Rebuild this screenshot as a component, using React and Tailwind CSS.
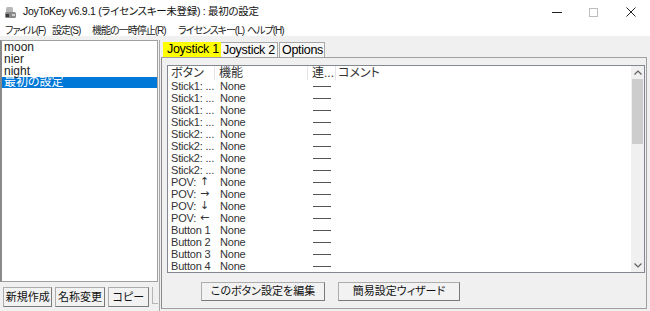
import React from 'react';

const ROWS = [
  ['Stick1: ...'], ['Stick1: ...'], ['Stick1: ...'], ['Stick1: ...'],
  ['Stick2: ...'], ['Stick2: ...'], ['Stick2: ...'], ['Stick2: ...'],
  ['POV:', '↑'], ['POV:', '→'], ['POV:', '↓'], ['POV:', '←'],
  ['Button 1'], ['Button 2'], ['Button 3'], ['Button 4'],
];

const MENU = [
  { label: 'ファイル(F)', w: 'w-[47px]' },
  { label: '設定(S)', w: 'w-[40px]' },
  { label: '機能の一時停止(R)', w: 'w-[86px]' },
  { label: 'ライセンスキー(L)', w: 'w-[69px]' },
  { label: 'ヘルプ(H)', w: 'w-[60px]' },
];

const PROFILES = ['moon', 'nier', 'night'];

function AppIcon() {
  return (
    <svg width="13" height="12" viewBox="0 0 13 12">
      <rect x="2" y="0" width="7" height="7" rx="1.5" fill="#b8b8b8" />
      <rect x="1" y="5" width="11" height="6" rx="1.5" fill="#8a8a8a" />
      <rect x="2" y="7" width="3" height="3" fill="#3c3c3c" />
      <rect x="8" y="7" width="3" height="2" fill="#d0d0d0" />
    </svg>
  );
}

function Button({ children, className = '' }) {
  return (
    <div className={`flex items-center justify-center bg-[#f2f2f2] border border-[#adadad] border-b-[#7a7a7a] border-r-[#7a7a7a] text-[11px] text-[#111] whitespace-nowrap ${className}`}>
      {children}
    </div>
  );
}

export default function App() {
  return (
    <div className="w-[650px] h-[311px] overflow-hidden bg-white font-['Liberation_Sans','Noto_Sans_CJK_JP',sans-serif] [font-feature-settings:'palt'] text-black">
      {/* Title bar */}
      <div className="h-[24px] flex items-center">
        <div className="ml-[4px] mt-[1px]"><AppIcon /></div>
        <span className="ml-[6px] text-[10.5px] text-[#111] tracking-[-0.3px] font-['Liberation_Sans_Narrow','Liberation_Sans','Noto_Sans_CJK_JP',sans-serif]">JoyToKey v6.9.1 (ライセンスキー未登録) : 最初の設定</span>
        <div className="ml-auto flex items-center h-full">
          <div className="w-[37px] flex justify-center"><div className="w-[10px] h-[1px] bg-[#222]" /></div>
          <div className="w-[37px] flex justify-center"><div className="w-[9px] h-[9px] border border-[#bdbdbd]" /></div>
          <div className="w-[37px] flex justify-center mr-[1px]">
            <svg width="10" height="10" viewBox="0 0 10 10"><path d="M0.5 0.5 L9.5 9.5 M9.5 0.5 L0.5 9.5" stroke="#222" strokeWidth="1" /></svg>
          </div>
        </div>
      </div>

      {/* Menu bar */}
      <div className="h-[12px] flex items-center pl-[5px] text-[10px] tracking-[-1px] text-[#222]">
        {MENU.map((m) => (
          <span key={m.label} className={`${m.w} whitespace-nowrap`}>{m.label}</span>
        ))}
      </div>

      {/* Body */}
      <div className="h-[275px] bg-[#f0f0f0] flex">
        {/* Left column */}
        <div className="w-[158px] pt-[4px] flex flex-col">
          <div className="h-[242px] bg-white border border-[#a0a0a0] border-l-[2px] border-l-[#8a8a8a] text-[12px] text-[#222]">
            {PROFILES.map((p) => (
              <div key={p} className="h-[12px] leading-[12px] pl-[2px]">{p}</div>
            ))}
            <div className="h-[11px] leading-[11px] pl-[2px] bg-[#0078d7] text-white">最初の設定</div>
          </div>
          <div className="mt-[5px] flex gap-[3px] pl-[3px] h-[20px]">
            <Button className="w-[50px]">新規作成</Button>
            <Button className="w-[50px]">名称変更</Button>
            <Button className="w-[42px]">コピー</Button>
            <div className="w-[6px] h-[17px] border-l border-b border-[#b5b5b5]" />
          </div>
        </div>

        {/* Splitter */}
        <div className="w-[3px] flex justify-center pt-[4px]">
          <div className="w-[1px] h-full bg-[#a8a8a8]" />
        </div>

        {/* Right column */}
        <div className="w-[486px] pt-[6px] flex flex-col">
          {/* Tabs */}
          <div className="flex h-[15px] ml-[2px] text-[12.5px] tracking-[-0.3px] leading-[15px]">
            <div className="w-[58px] bg-[#ffff00] pl-[4px] text-black whitespace-nowrap">Joystick 1</div>
            <div className="w-[57px] border-t border-r border-[#a8a8a8] pl-[2px] text-black bg-[#f7f7f7] whitespace-nowrap">Joystick 2</div>
            <div className="w-[46px] border-t border-r border-l border-[#a8a8a8] ml-[1px] pl-[2px] text-black bg-[#f7f7f7] whitespace-nowrap">Options</div>
          </div>

          {/* Tab panel */}
          <div className="h-[252px] border border-[#a0a0a0] border-l-[#8a8a8a] bg-[#f0f0f0] pt-[7px] pl-[5px] pr-[1px]">
            {/* List view */}
            <div className="w-[478px] h-[208px] bg-white border border-[#828790] flex">
              <div className="flex-1 overflow-hidden">
                <div className="h-[14px] flex text-[12px] leading-[14px] text-[#333]">
                  <div className="w-[47px] border-r border-[#e5e5e5] pl-[3px] whitespace-nowrap">ボタン</div>
                  <div className="w-[93px] border-r border-[#e5e5e5] pl-[4px] whitespace-nowrap">機能</div>
                  <div className="w-[28px] border-r border-[#e5e5e5] pl-[4px] whitespace-nowrap overflow-hidden">連...</div>
                  <div className="flex-1 pl-[2px] whitespace-nowrap">コメント</div>
                </div>
                {ROWS.map((r, i) => (
                  <div key={i} className="h-[12px] flex items-center text-[11px] leading-[12px] text-[#333] tracking-[-0.2px]">
                    <div className="w-[47px] h-[12px] pl-[3px] whitespace-nowrap overflow-hidden flex items-center">
                      <span>{r[0]}</span>
                      {r[1] && <span className="ml-[4px] leading-[12px] text-[11px] font-['DejaVu_Sans',sans-serif]">{r[1]}</span>}
                    </div>
                    <div className="w-[93px] pl-[5px]">None</div>
                    <div className="w-[28px] pl-[5px]"><div className="w-[18px] h-[1px] bg-[#555]" /></div>
                  </div>
                ))}
              </div>
              {/* Scrollbar */}
              <div className="w-[13px] bg-[#f0f0f0] flex flex-col items-center">
                <div className="h-[13px] flex items-center justify-center">
                  <svg width="8" height="5" viewBox="0 0 8 5"><path d="M0.5 4.5 L4 1 L7.5 4.5" stroke="#606060" strokeWidth="1.2" fill="none" /></svg>
                </div>
                <div className="w-[11px] h-[65px] bg-[#cdcdcd]" />
                <div className="flex-1" />
                <div className="h-[13px] flex items-center justify-center">
                  <svg width="8" height="5" viewBox="0 0 8 5"><path d="M0.5 0.5 L4 4 L7.5 0.5" stroke="#606060" strokeWidth="1.2" fill="none" /></svg>
                </div>
              </div>
            </div>

            {/* Action buttons */}
            <div className="mt-[9px] flex gap-[13px] pl-[34px] h-[19px]">
              <Button className="w-[124px]">このボタン設定を編集</Button>
              <Button className="w-[122px]">簡易設定ウィザード</Button>
            </div>
          </div>
        </div>
      </div>
    </div>
  );
}
